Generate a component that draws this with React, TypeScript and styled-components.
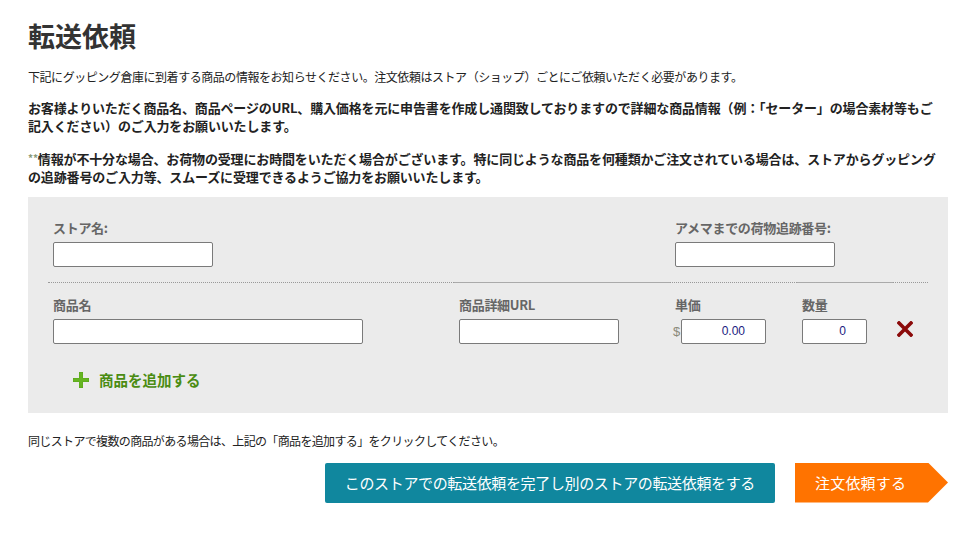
import React from "react";
import styled, { createGlobalStyle } from "styled-components";

const GlobalStyle = createGlobalStyle`
  body {
    margin: 0;
    background: #fff;
    font-family: "Noto Sans CJK JP", "Noto Sans", "Liberation Sans", sans-serif;
    color: #222;
  }
`;

const columns = "406px 216px 127px 96px 35px";

const Page = styled.main`
  width: 920px;
  padding: 18px 0 0 28px;
`;

const Title = styled.h1`
  margin: 0;
  font-size: 27px;
  line-height: 36px;
  font-weight: bold;
  color: #333;
`;

const Intro = styled.p`
  margin: 13.5px 0 0;
  font-size: 12px;
  line-height: 18px;
  letter-spacing: -0.45px;
`;

const Notice = styled.p`
  margin: 13.5px 0 0;
  font-size: 13px;
  line-height: 18px;
  font-weight: bold;
  letter-spacing: -0.15px;
  & + & {
    margin-top: 14px;
  }
`;

const Stars = styled.span`
  font-size: 10px;
  color: #8a9a7a;
  vertical-align: 2px;
`;

const Panel = styled.section`
  margin-top: 10.5px;
  background: #ebebeb;
  padding: 23px 20px 20px;
`;

const Row = styled.div`
  display: grid;
  grid-template-columns: ${columns};
  align-items: end;
`;

const TopRow = styled(Row)`
  padding-bottom: 15px;
`;

const ItemRow = styled(Row)`
  padding-top: 14px;
`;

const Rules = styled.div`
  display: grid;
  grid-template-columns: ${columns};
`;

const Rule = styled.div<{ $solid?: boolean }>`
  border-top: 1px ${({ $solid }) => ($solid ? "solid #aaa" : "dotted #999")};
`;

const Field = styled.div<{ $span?: number }>`
  grid-column: span ${({ $span }) => $span ?? 1};
  padding-left: 5px;
  display: flex;
  flex-direction: column;
  gap: 6px;
`;

const Label = styled.label`
  font-size: 13px;
  line-height: 16px;
  font-weight: bold;
  color: #666;
  letter-spacing: -0.3px;
`;

const Input = styled.input<{ $w: number }>`
  box-sizing: border-box;
  width: ${({ $w }) => $w}px;
  height: 25px;
  border: 1px solid #7a7a7a;
  border-radius: 2px;
  background: #fff;
  padding: 0 20px 0 4px;
  font-family: "Liberation Sans", sans-serif;
  font-size: 12px;
  color: #1a1a80;
  text-align: ${({ value }) => (value ? "right" : "left")};
  outline: none;
`;

const PriceBox = styled.div`
  display: flex;
  align-items: center;
  margin-left: -2px;
`;

const Dollar = styled.span`
  font-family: "Liberation Sans", sans-serif;
  font-size: 13px;
  line-height: 15px;
  color: #8a8a7a;
  width: 8px;
`;

const RemoveButton = styled.button`
  border: 0;
  background: none;
  padding: 0 0 4px 4px;
  height: 25px;
  display: flex;
  align-items: center;
  cursor: pointer;
`;

const AddLink = styled.a`
  display: inline-flex;
  align-items: center;
  gap: 10px;
  margin: 26px 0 0 25px;
  height: 20px;
  font-size: 14.5px;
  font-weight: bold;
  color: #4a8c12;
  cursor: pointer;
`;

const Hint = styled.p`
  margin: 19px 0 0;
  font-size: 12px;
  line-height: 17px;
  letter-spacing: -0.65px;
`;

const Actions = styled.div`
  margin-top: 14px;
  display: flex;
  justify-content: flex-end;
  align-items: center;
  gap: 20px;
`;

const NextStoreButton = styled.button`
  height: 40px;
  padding: 0 20px;
  border: 0;
  border-radius: 2px;
  background: #10879e;
  color: #fff;
  font-family: inherit;
  font-size: 15px;
  letter-spacing: -0.35px;
  cursor: pointer;
`;

const OrderButton = styled.button`
  width: 153px;
  height: 40px;
  padding: 0 0 0 20px;
  border: 0;
  background: #ff7300;
  color: #fff;
  text-align: left;
  font-family: inherit;
  font-size: 15px;
  letter-spacing: 0.2px;
  clip-path: polygon(0 0, 133px 0, 100% 50%, 133px 100%, 0 100%);
  cursor: pointer;
`;

const PlusIcon = () => (
  <svg width="16" height="16" viewBox="0 0 16 16">
    <path d="M6 0h4v6h6v4h-6v6H6v-6H0V6h6z" fill="#5aa51c" />
    <path d="M6.5 0.5h3v6h6v3h-6v6h-3v-6h-6v-3h6z" fill="#66b522" />
  </svg>
);

const CrossIcon = () => (
  <svg width="16" height="16" viewBox="0 0 16 16">
    <path d="M2 2L14 14M14 2L2 14" stroke="#8b0a0a" strokeWidth="3.6" strokeLinecap="square" />
  </svg>
);

const App: React.FC = () => {
  return (
    <>
      <GlobalStyle />
      <Page>
        <Title>転送依頼</Title>
        <Intro>
          下記にグッピング倉庫に到着する商品の情報をお知らせください。注文依頼はストア（ショップ）ごとにご依頼いただく必要があります。
        </Intro>
        <Notice>
          お客様よりいただく商品名、商品ページのURL、購入価格を元に申告書を作成し通関致しておりますので詳細な商品情報（例：「セーター」の場合素材等もご
          <br />
          記入ください）のご入力をお願いいたします。
        </Notice>
        <Notice>
          <Stars>**</Stars>
          情報が不十分な場合、お荷物の受理にお時間をいただく場合がございます。特に同じような商品を何種類かご注文されている場合は、ストアからグッピング
          <br />
          の追跡番号のご入力等、スムーズに受理できるようご協力をお願いいたします。
        </Notice>

        <Panel>
          <TopRow>
            <Field $span={2}>
              <Label>ストア名:</Label>
              <Input $w={160} />
            </Field>
            <Field $span={3}>
              <Label>アメマまでの荷物追跡番号:</Label>
              <Input $w={160} />
            </Field>
          </TopRow>
          <Rules>
            <Rule />
            <Rule $solid />
            <Rule />
            <Rule $solid />
            <Rule />
          </Rules>
          <ItemRow>
            <Field>
              <Label>商品名</Label>
              <Input $w={310} />
            </Field>
            <Field>
              <Label>商品詳細URL</Label>
              <Input $w={160} />
            </Field>
            <Field>
              <Label>単価</Label>
              <PriceBox>
                <Dollar>$</Dollar>
                <Input $w={85} value="0.00" readOnly />
              </PriceBox>
            </Field>
            <Field>
              <Label>数量</Label>
              <Input $w={65} value="0" readOnly />
            </Field>
            <RemoveButton aria-label="削除">
              <CrossIcon />
            </RemoveButton>
          </ItemRow>
          <AddLink>
            <PlusIcon />
            商品を追加する
          </AddLink>
        </Panel>

        <Hint>同じストアで複数の商品がある場合は、上記の「商品を追加する」をクリックしてください。</Hint>
        <Actions>
          <NextStoreButton>このストアでの転送依頼を完了し別のストアの転送依頼をする</NextStoreButton>
          <OrderButton>注文依頼する</OrderButton>
        </Actions>
      </Page>
    </>
  );
};

export default App;
